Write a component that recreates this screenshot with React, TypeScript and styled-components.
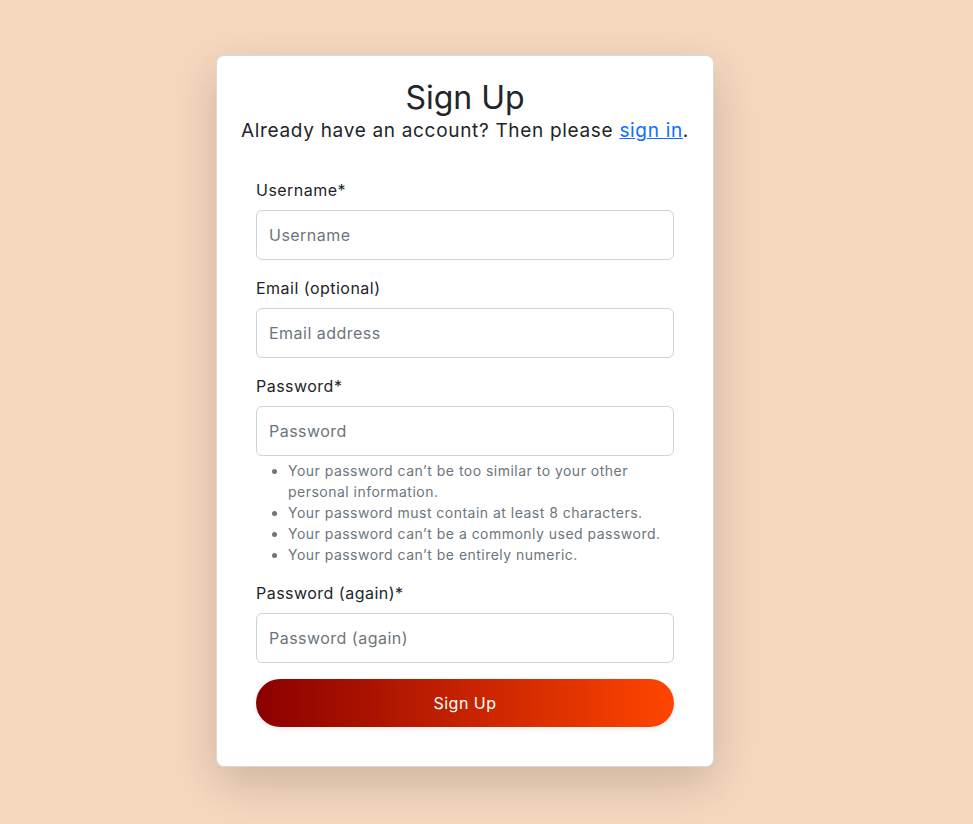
import React from "react";
import styled, { createGlobalStyle } from "styled-components";

const Global = createGlobalStyle`
  html, body { margin: 0; padding: 0; }
  body {
    background: #f6d8bf;
    font-family: Inter, "Open Sans", sans-serif;
    letter-spacing: 0.03em;
    color: #212529;
  }
`;

const Page = styled.main`
  min-height: 100vh;
  box-sizing: border-box;
  padding: 55px 0 56px 216px;
`;

const Card = styled.section`
  box-sizing: border-box;
  width: 498px;
  background: #fff;
  border: 1px solid #d6d9de;
  border-radius: 8px;
  box-shadow: 0 16px 48px rgba(0, 0, 0, 0.175);
  padding: 23px 23px 39px;
`;

const Header = styled.header`
  text-align: center;
`;

const Title = styled.h1`
  margin: 0;
  font-size: 32px;
  font-weight: 400;
  line-height: 38px;
  letter-spacing: 0;
`;

const Subtitle = styled.p`
  margin: 0 -12px;
  font-size: 19px;
  line-height: 27px;
  letter-spacing: 0.036em;
  white-space: nowrap;
  a {
    color: #0d6efd;
    text-decoration: underline;
  }
`;

const Form = styled.form`
  display: flex;
  flex-direction: column;
  padding: 34px 16px 0;
`;

const Field = styled.div`
  display: flex;
  flex-direction: column;
  margin-bottom: 16px;
`;

const Label = styled.label`
  font-size: 16px;
  line-height: 24px;
  margin-bottom: 8px;
`;

const Input = styled.input`
  box-sizing: border-box;
  height: 50px;
  width: 100%;
  padding: 12px;
  font-family: inherit;
  font-size: 16px;
  letter-spacing: 0.03em;
  color: #212529;
  border: 1px solid #ced4da;
  border-radius: 6px;
  outline: none;
  &::placeholder {
    color: #6c757d;
  }
`;

const Help = styled.ul`
  margin: 4px 0 0;
  padding-left: 32px;
  font-size: 14px;
  line-height: 21px;
  color: #6c757d;
`;

const Button = styled.button`
  height: 48px;
  width: 100%;
  border: none;
  border-radius: 24px;
  background: linear-gradient(to right, #8b0000, #ff4500);
  color: #fff;
  font-family: inherit;
  font-size: 16px;
  letter-spacing: 0.03em;
  box-shadow: 0 2px 4px rgba(0, 0, 0, 0.08);
  cursor: pointer;
`;

export default function App() {
  return (
    <>
      <Global />
      <Page>
        <Card>
          <Header>
            <Title>Sign Up</Title>
            <Subtitle>
              Already have an account? Then please <a href="#">sign in</a>.
            </Subtitle>
          </Header>
          <Form onSubmit={(e) => e.preventDefault()}>
            <Field>
              <Label>Username*</Label>
              <Input placeholder="Username" />
            </Field>
            <Field>
              <Label>Email (optional)</Label>
              <Input placeholder="Email address" />
            </Field>
            <Field>
              <Label>Password*</Label>
              <Input type="password" placeholder="Password" />
              <Help>
                <li>Your password can’t be too similar to your other personal information.</li>
                <li>Your password must contain at least 8 characters.</li>
                <li>Your password can’t be a commonly used password.</li>
                <li>Your password can’t be entirely numeric.</li>
              </Help>
            </Field>
            <Field>
              <Label>Password (again)*</Label>
              <Input type="password" placeholder="Password (again)" />
            </Field>
            <Button type="submit">Sign Up</Button>
          </Form>
        </Card>
      </Page>
    </>
  );
}
